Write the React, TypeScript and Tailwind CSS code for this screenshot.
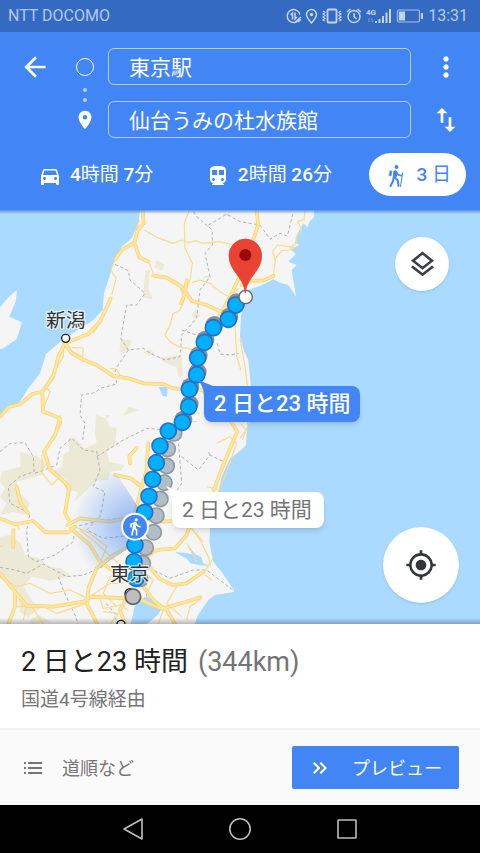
import { useState } from "react";
import {
  MdArrowBack,
  MdDirectionsCar,
  MdDirectionsTransit,
  MdDirectionsWalk,
  MdKeyboardDoubleArrowRight,
  MdMoreVert,
  MdMyLocation,
  MdOutlineLayers,
  MdPlace,
  MdSwapVert,
} from "react-icons/md";

const tabs = [
  { id: "car", label: "4時間 7分", icon: MdDirectionsCar },
  { id: "transit", label: "2時間 26分", icon: MdDirectionsTransit },
  { id: "walk", label: "3 日", icon: HikerIcon },
];

// Map geometry, three units to the pixel.
const land = [
  "M420 0L416 35L405 62L395 85L365 110L342 155L330 195L312 250L308 300L280 330L225 365L175 400L138 432L120 490L85 535L60 575L20 600L0 612V1242H585L592 1218L625 1170L645 1155L705 1145L668 1090L640 1055L628 995L630 955L650 865L665 800L690 745L720 723L738 705L742 635L752 525L745 450L733 425L720 380L723 315L745 240L780 228L820 208L840 218L865 225L888 260L875 180L890 165L865 155L888 132L870 118L899 105L885 98L890 75L910 40L923 52L928 35L942 22V0Z",
  "M0 292L25 262L51 240L47 275L28 320L66 337L50 387L10 415L0 418Z",
];

const water = [
  "M403 1190L425 1168L440 1160L465 1172L491 1188L475 1212L450 1235L440 1242H392L400 1210Z",
  "M525 1027L550 1028L577 1033L562 1003L585 1032L604 1042L610 1060L632 1068L600 1066L572 1060L560 1046Z",
  "M476 530L503 532L501 560L487 557Z",
];

const terrain = [
  "M470 150L494 163L485 182L464 172Z",
  "M436 181L450 181L445 235L458 268L430 262Z",
  "M588 298L602 318L585 326L574 316Z",
  "M364 387L393 391L388 415L372 430L358 422Z",
  "M625 195L637 190L630 206L610 203Z",
  "M668 10L692 12L686 20Z",
  "M478 443L545 435L549 500H535L530 472L490 456Z",
  "M385 591L417 599L392 608L370 618Z",
  "M430 425L455 418L460 432L445 438Z",
  "M288 615L318 625L330 650L350 655L345 705L320 725L328 755L372 765L365 780L330 785L325 810L290 812L255 845L222 876L235 845L195 840L200 808L160 785L185 770L190 735L208 722L205 685L222 682L255 715L290 700L285 665Z",
  "M60 725L110 738L140 762L125 795L90 805L50 815L60 850L90 880L75 915L40 905L0 915L20 880L0 862L15 835L0 815L5 785L62 770Z",
  "M0 980L30 975L62 1000L75 1035L118 1045L145 1070L185 1075L212 1098L150 1112L95 1100L70 1130L100 1175L120 1195L85 1222L60 1205L55 1150L20 1118L0 1105Z",
  "M95 1225L120 1215L150 1235L90 1242Z",
  "M315 615H330L322 628Z",
];

const borders = [
  "M345 163L385 182L390 210L435 250L410 285H380L362 385L385 420L430 415L455 432L495 450L540 440L545 375L590 325L600 240L630 200L615 130L637 105V60L590 20L580 5",
  "M625 45L655 28L680 12L720 35L780 45L810 88L840 70L862 78L880 5",
  "M385 420L345 480L350 522L300 535L285 548L245 555L240 615L255 640L248 690",
  "M545 360L590 375M652 400L660 432L690 435L715 430",
  "M0 725L30 700L75 698L100 740L102 785L60 800L25 830L30 880L90 910L80 960L85 1040L110 1055L165 1035L220 995L225 950L290 935L360 925",
  "M105 790L170 765L180 715L215 685L250 720L290 725L300 780L280 830L315 845L300 920L260 960L310 985L405 975",
  "M290 740L370 690L440 655L500 660L535 690L545 820L525 850",
  "M545 740L595 780L630 735L670 755M630 735L625 725",
  "M0 1072L45 1080L80 1090L130 1062L200 1100L250 1095L320 1065L380 1078L440 1070L510 1105L580 1080L620 1080L705 1145",
  "M175 1100L190 1140L225 1215L235 1242M318 1180L345 1210L350 1242M440 1100L440 1160",
];

const majorRoads = [
  "M428 0L431 40L412 62L403 98L365 120L346 148",
  "M403 98L418 142L445 155",
  "M460 197L500 203L545 230L575 272L620 285L668 308",
  "M560 210L555 250L543 280",
  "M332 265L300 335L265 372L225 388L195 400",
  "M195 400L215 430L245 447L290 465L340 498L385 505L430 520L488 522L520 535L605 540",
  "M195 400L175 440L160 500L127 545L95 553L60 583L25 592L0 620",
  "M127 545L129 605L150 612L180 625L165 675L132 725L150 778L185 808L208 830L195 910L212 940",
  "M0 925L45 943L100 933L137 967L205 967L225 950",
  "M202 945L240 925L330 935L400 920L480 935L560 932",
  "M212 955L270 1005L300 1055L350 1090",
  "M0 1090L45 1145L80 1187L160 1190L250 1175L270 1160L380 1165",
  "M405 1000L340 1035L290 1075L265 1135L262 1185L292 1242",
  "M45 1150L45 1190L25 1242",
  "M345 795L392 805L425 830",
  "M390 760L388 738L410 713",
  "M680 615L712 665L690 715L660 790L642 840",
  "M770 0L774 45L760 90",
  "M718 200L700 240L665 308L615 380",
  "M725 225L745 212L790 212L820 198",
  "M50 830L62 880L85 910M40 960L40 1010",
  "M405 1160L455 1185L500 1200L525 1242",
  "M430 1130L460 1170L490 1195L560 1175L600 1162",
  "M440 1060L480 1108L520 1125L560 1120L610 1085",
  "M430 1045L470 1020L525 1015L560 975L570 945",
  "M445 700L440 780L420 850L400 930",
  "M380 1165L360 1200L375 1242",
];

const minorRoads = [
  "M432 60L470 82L520 100L545 90L565 98L590 92L605 100L660 95L700 105",
  "M568 0L553 40L555 115L577 160L570 210L557 240L540 235L555 265L540 300L518 312L512 340L495 375L510 395L535 410L585 420",
  "M346 148L332 180L349 205L335 255M418 30L400 95M445 155L460 190",
  "M575 218L600 210L630 220L660 245L690 262L715 235",
  "M280 370L310 320L315 300M215 412L250 414L248 440L210 420",
  "M192 405L190 440L165 480L135 530L150 545L135 585M330 475L350 478L362 498",
  "M820 198L826 150L818 125L832 105L885 112L870 120L845 122L822 150",
  "M915 0L912 28L893 35L905 60L888 82L890 100L868 115",
  "M710 290L705 340L710 440L722 480M720 385L735 470L742 525L745 640L728 690M722 640L738 660L720 685",
  "M165 675L185 640L180 615M125 735L128 790L155 825L180 800L200 835",
  "M225 950L270 970L320 1010L300 1060M240 960L290 1000L360 1065",
  "M0 1100L50 1130L90 1120L150 1150L210 1140L262 1165",
  "M50 1190L120 1185L170 1210L260 1180M262 1165L330 1120L370 1120",
  "M300 1165L310 1195L360 1185L385 1200M330 1242L355 1210L310 1205",
  "M370 1070L330 1100L310 1150L350 1190M420 1075L460 1110L440 1150L470 1180",
  "M565 945L610 995M575 955L600 990L625 1040L632 1065M560 1000L590 1055",
  "M605 1165L570 1190L560 1230M530 1130L500 1180L545 1220M490 1200L475 1242",
  "M640 1045L610 1090L635 1110M650 700L690 680L710 700L660 840L620 830",
  "M550 600L600 610M600 540L620 560M560 635H590",
  "M80 1187L70 1230M95 1190L130 1242M0 1010L10 1005M45 940L60 960",
];

const altStops = [
  [522, 670], [503, 717], [500, 768], [493, 818], [481, 867],
  [469, 917], [461, 967], [437, 1013], [428, 1060], [420, 1107],
];

const stops = [
  [707, 285], [685, 328], [640, 353], [613, 397], [593, 444], [590, 494],
  [568, 538], [566, 590], [547, 637], [505, 663], [480, 708], [469, 758],
  [458, 808], [447, 859], [434, 907], [405, 1005], [402, 1055], [408, 1105],
];

const jp = "font-['Roboto','Noto_Sans_CJK_JP',sans-serif]";

function HikerIcon({ className }: { className?: string }) {
  return (
    <svg className={className} viewBox="0 0 24 24" fill="none" stroke="currentColor" strokeLinecap="round" strokeLinejoin="round">
      <circle cx="12.500" cy="3" r="2" fill="currentColor" stroke="none" />
      <path d="M6.200 6.800L8 7.200L7 12L5.200 11.500Z" fill="currentColor" strokeWidth="0.600" />
      <path d="M11 7.500L9.800 13L9 17L6.500 22" strokeWidth="2" />
      <path d="M10.200 7.200L12 6.800L12.800 12L10 13.500Z" fill="currentColor" strokeWidth="1" />
      <path d="M10.500 13L13.800 16.500L14.500 22" strokeWidth="2" />
      <path d="M12 7.500L14.200 10.800L17.500 11.800" strokeWidth="1.600" />
      <path d="M18.600 8.800L16.500 22.500" strokeWidth="1" />
    </svg>
  );
}

// Digits are set heavier than the Japanese units beside them.
function Duration({ text, digitClass }: { text: string; digitClass: string }) {
  return (
    <span className="whitespace-pre">
      {text.split(/(\d+)/).map((part, i) => (
        <span key={i} className={i % 2 ? digitClass : "font-normal"}>
          {part}
        </span>
      ))}
    </span>
  );
}

function StatusBar() {
  return (
    <div className="flex h-8 items-center justify-between bg-[#356ac3] pr-3 pl-2 text-base text-[#b3c9ee]">
      <span>NTT DOCOMO</span>
      <div className="flex items-center gap-1">
        <svg width="138" height="20" viewBox="0 0 138 20" fill="none" stroke="#c3d4f1" strokeWidth="1.5">
          <path d="M13.500 13A6.500 6.500 0 1 1 14 8.500M9 16.500L15 11M12 16L15 13.500" />
          <path d="M4.500 9L6.500 7V13.500M9 6.500V13L11 11" />
          <path d="M25.500 17C22 13 20.500 11 20.500 8.500A5 5 0 0 1 30.500 8.500C30.500 11 29 13 25.500 17Z" />
          <circle cx="25.500" cy="8.500" r="1" fill="#c3d4f1" />
          <rect x="41.500" y="3.500" width="9" height="13" rx="1" strokeWidth="1.800" />
          <path d="M37 5L39 6.500L37 8L39 9.500L37 11L39 12.500L37 14L38.500 15M55 5L53 6.500L55 8L53 9.500L55 11L53 12.500L55 14L53.500 15" strokeWidth="1.200" />
          <circle cx="68" cy="10.500" r="6" />
          <path d="M68 7V10.500L70.500 13M61 6L64.500 3M75 6L71.500 3" />
          <path d="M90 17V15M93.500 17V13M97 17V10M100.500 17V6.500M104 17V3" strokeWidth="2" />
          <path d="M83 12V16L82 15M86 12V16L87.500 15" strokeWidth="1" opacity="0.4" />
          <text x="80" y="8.500" fontSize="8" fontWeight="700" fill="#c3d4f1" stroke="none">4G</text>
          <rect x="111.500" y="4" width="22" height="12" rx="1.500" strokeWidth="1.200" opacity="0.8" />
          <rect x="113" y="5.500" width="6" height="9" fill="#c3d4f1" stroke="none" />
          <path d="M136 7V13" strokeWidth="2" />
        </svg>
        <span>13:31</span>
      </div>
    </div>
  );
}

function Header() {
  const [mode, setMode] = useState("walk");

  return (
    <header className="bg-[#4285f4] text-white">
      <div className="grid grid-cols-[70px_30px_1fr_69px] gap-y-4 pt-4">
        <button type="button" aria-label="戻る" className="flex items-center justify-center">
          <MdArrowBack className="size-8" />
        </button>
        <label htmlFor="origin" aria-label="出発地" className="relative flex items-center justify-center">
          <span className="size-[18px] rounded-full border border-white" />
          <span className="absolute top-10 flex flex-col gap-1.5">
            <span className="size-1 rounded-full bg-white/60" />
            <span className="size-1 rounded-full bg-white/60" />
          </span>
        </label>
        <input
          id="origin"
          defaultValue="東京駅"
          className="ml-2 h-[37px] min-w-0 rounded-md border border-white/60 pr-2 pb-0.5 pl-5 text-[21px] outline-none"
        />
        <button type="button" aria-label="メニュー" className="flex items-center justify-center">
          <MdMoreVert className="size-8" />
        </button>
        <span />
        <label htmlFor="destination" aria-label="目的地" className="flex items-center justify-center">
          <MdPlace className="size-[22px]" />
        </label>
        <input
          id="destination"
          defaultValue="仙台うみの杜水族館"
          className="ml-2 h-[37px] min-w-0 rounded-md border border-white/60 pr-2 pb-0.5 pl-5 text-[21px] outline-none"
        />
        <button type="button" aria-label="入れ替え" className="flex items-center justify-center">
          <MdSwapVert className="size-8" />
        </button>
      </div>

      <nav className="flex justify-between pt-[15px] pr-3.5 pb-3.5 pl-[23px]">
        {tabs.map(({ id, label, icon: Icon }) => (
          <button
            key={id}
            type="button"
            onClick={() => setMode(id)}
            className={`flex h-[43px] items-center gap-2 rounded-full px-[15px] pt-0.5 text-[19px] ${
              mode === id ? "bg-white text-[#4285f4]" : ""
            }`}
          >
            <Icon className="size-6" />
            <Duration text={label} digitClass="font-medium" />
          </button>
        ))}
      </nav>
    </header>
  );
}

function MapDrawing() {
  return (
    <svg className="absolute inset-0 size-full" viewBox="0 0 1440 1242" preserveAspectRatio="xMidYMid slice">
      <defs>
        <radialGradient id="heading" gradientUnits="userSpaceOnUse" cx="405" cy="950" r="190">
          <stop offset="0" stopColor="#4285f4" stopOpacity="0.6" />
          <stop offset="1" stopColor="#4285f4" stopOpacity="0" />
        </radialGradient>
      </defs>
      <rect width="1440" height="1242" fill="#aadaff" />
      <g fill="#f5f5f5">
        {land.map((d) => <path key={d} d={d} />)}
      </g>
      <g fill="#ece9d6">
        {terrain.map((d) => <path key={d} d={d} />)}
      </g>
      <g fill="#aadaff">
        {water.map((d) => <path key={d} d={d} />)}
      </g>
      <g fill="none" stroke="#a3a5a8" strokeWidth="2.5" strokeDasharray="10 7">
        {borders.map((d) => <path key={d} d={d} />)}
      </g>
      <g fill="none" stroke="#fbdb85" strokeWidth="3.5" strokeLinejoin="round">
        {minorRoads.map((d) => <path key={d} d={d} />)}
      </g>
      <g fill="none" stroke="#f8d272" strokeWidth="11" strokeLinejoin="round" strokeLinecap="round">
        {majorRoads.map((d) => <path key={d} d={d} />)}
      </g>
      <g fill="none" stroke="#ffe69c" strokeWidth="7" strokeLinejoin="round" strokeLinecap="round">
        {majorRoads.map((d) => <path key={d} d={d} />)}
      </g>

      <path d="M420 900L352 795L200 740L180 1140L270 1150L285 1085L405 1000Z" fill="url(#heading)" />

      <g fill="#8b9094">
        {stops.slice(0, 9).map(([x, y]) => <circle key={y} cx={x + 3} cy={y - 8} r="27" />)}
      </g>
      <g fill="#b0bec5" stroke="#9099a3" strokeWidth="5">
        {altStops.map(([x, y]) => <circle key={y} cx={x} cy={y} r="23" />)}
      </g>
      <g fill="#00b0ff" stroke="#2470c4" strokeWidth="5">
        {stops.map(([x, y]) => <circle key={y} cx={x} cy={y} r="24" />)}
      </g>

      <circle cx="390" cy="1151" r="15" fill="#fff" stroke="#111" strokeWidth="4" />
      <circle cx="399" cy="1160" r="23" fill="#bdbdbd" stroke="#5f6368" strokeWidth="5" />
      <circle cx="363" cy="1243" r="12" fill="#fff" stroke="#111" strokeWidth="4" />
      <circle cx="197" cy="385" r="12" fill="#fff" stroke="#222" strokeWidth="4" />

      <circle cx="737" cy="261" r="20" fill="#fff" stroke="#666" strokeWidth="4" />
      <path
        d="M736 249C732 200 687 185 687 136A49 49 0 0 1 785 136C785 185 740 200 736 249Z"
        fill="#ea4335"
        stroke="#d23f31"
        strokeWidth="2"
      />
      <circle cx="736" cy="135" r="18" fill="#960a0a" />

      <g fontSize="59" fill="#333" stroke="#fff" strokeOpacity="0.8" strokeWidth="7" strokeLinejoin="round" paintOrder="stroke">
        <text x="138" y="350">新潟</text>
        <text x="330" y="1113">東京</text>
      </g>

      <circle cx="405" cy="950" r="39" fill="#4285f4" stroke="#fff" strokeWidth="6" />
      <MdDirectionsWalk x="376" y="921" size={58} color="#fff" />
    </svg>
  );
}

function RouteMap() {
  return (
    <main className="relative min-h-[414px] flex-1 overflow-hidden">
      <MapDrawing />
      <div className="absolute inset-x-0 top-0 h-1 bg-linear-to-b from-[#4d7fc8]/80 to-transparent" />
      <div className="absolute inset-x-0 bottom-0 h-1.5 bg-linear-to-t from-black/25 to-transparent" />

      <button
        type="button"
        className="absolute top-[176px] left-[204px] h-9 rounded-lg bg-[#4285f4] px-2.5 text-[22px] leading-9 font-medium whitespace-nowrap text-white shadow-md"
      >
        <svg className="absolute -top-1.5 -left-1.5" width="18" height="18" viewBox="0 0 18 18" fill="#4285f4">
          <path d="M0 0L15 6L6 16C6 10 4 5 0 0Z" />
        </svg>
        <span className="relative">2 日と23 時間</span>
      </button>
      <button
        type="button"
        className="absolute top-[282px] left-[172px] h-9 rounded-lg bg-white pr-3 pl-2.5 text-[21px] leading-9 whitespace-nowrap text-[#757575] shadow-md"
      >
        <svg className="absolute -top-1.5 -left-1.5" width="18" height="18" viewBox="0 0 18 18" fill="#fff">
          <path d="M0 0L15 6L6 16C6 10 4 5 0 0Z" />
        </svg>
        <span className="relative">2 日と23 時間</span>
      </button>

      <button
        type="button"
        aria-label="地図の種類"
        className="absolute top-[27px] right-[31px] flex size-[54px] items-center justify-center rounded-full bg-white text-[#3c4043] shadow"
      >
        <MdOutlineLayers className="size-[31px]" />
      </button>
      <button
        type="button"
        aria-label="現在地"
        className="absolute right-[21px] bottom-[21px] flex size-[76px] items-center justify-center rounded-full bg-white text-[#333639] shadow"
      >
        <MdMyLocation className="size-8" />
      </button>
    </main>
  );
}

function RouteSheet() {
  return (
    <section className="bg-white">
      <div className="px-[21px] pt-5 pb-3.5">
        <h1 className="flex items-baseline gap-2.5 text-[27px] leading-9 text-[#212121]">
          2 日と23 時間
          <span className="text-[#757575]">(344km)</span>
        </h1>
        <p className="pt-1.5 text-[19px] leading-7 text-[#757575]">国道4号線経由</p>
      </div>
      <div className="flex h-[77px] items-center justify-between border-t-2 border-[#f2f2f2] bg-[#fafafa] pr-[21px] pl-6">
        <button type="button" className="flex items-center gap-5 text-[18px] text-[#757575]">
          <svg width="18" height="12" viewBox="0 0 18 12" fill="#757575">
            <path d="M0 0H2V2H0ZM0 5H2V7H0ZM0 10H2V12H0ZM4 0H18V2H4ZM4 5H18V7H4ZM4 10H18V12H4Z" />
          </svg>
          <span className="pt-0.5">道順など</span>
        </button>
        <button
          type="button"
          className="flex h-[43px] items-center gap-5 rounded-xs bg-[#4285f4] pr-[17px] pl-4 text-[18px] text-white"
        >
          <MdKeyboardDoubleArrowRight className="size-6" />
          <span className="pt-0.5">プレビュー</span>
        </button>
      </div>
    </section>
  );
}

function SystemNav() {
  return (
    <nav className="flex h-12 items-center justify-center bg-black">
      <button type="button" aria-label="戻る" className="flex w-[107px] justify-center">
        <svg width="24" height="24" viewBox="0 0 24 24" fill="none" stroke="#bdbdbd" strokeWidth="1.6" strokeLinejoin="round">
          <path d="M21 2V22L3 12Z" />
        </svg>
      </button>
      <button type="button" aria-label="ホーム" className="flex w-[107px] justify-center">
        <svg width="24" height="24" viewBox="0 0 24 24" fill="none" stroke="#bdbdbd" strokeWidth="1.6">
          <circle cx="12" cy="12" r="10.2" />
        </svg>
      </button>
      <button type="button" aria-label="アプリ履歴" className="flex w-[107px] justify-center">
        <svg width="24" height="24" viewBox="0 0 24 24" fill="none" stroke="#bdbdbd" strokeWidth="1.6">
          <rect x="3" y="3" width="18" height="18" rx="0.5" />
        </svg>
      </button>
    </nav>
  );
}

export default function App() {
  return (
    <div className={`flex min-h-screen flex-col ${jp}`} lang="ja">
      <StatusBar />
      <Header />
      <RouteMap />
      <RouteSheet />
      <SystemNav />
    </div>
  );
}
